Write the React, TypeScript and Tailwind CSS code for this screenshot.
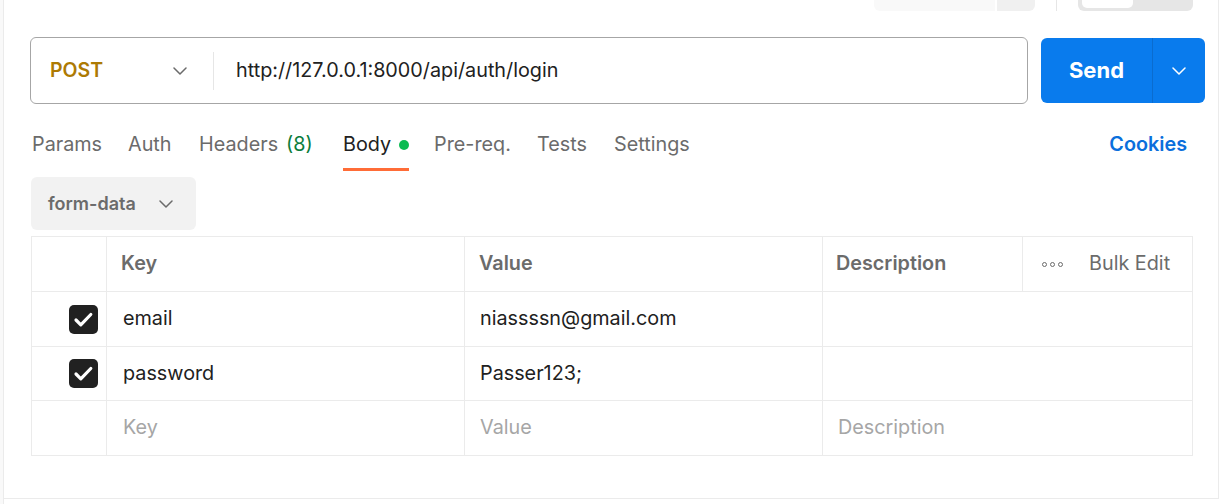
import React from "react";

const Chevron = ({ color = "#6b6b6b", className = "" }: { color?: string; className?: string }) => (
  <svg width="14" height="8" viewBox="0 0 14 8" className={className}>
    <path d="M1 1l6 6 6-6" fill="none" stroke={color} strokeWidth="1.5" strokeLinecap="round" strokeLinejoin="round" />
  </svg>
);

const Check = () => (
  <svg width="29" height="29" viewBox="0 0 29 29">
    <rect x="0" y="0" width="29" height="29" rx="5" fill="#212121" />
    <path d="M7 15l4.8 4.8 10-10.3" fill="none" stroke="#ffffff" strokeWidth="3.2" strokeLinecap="round" strokeLinejoin="round" />
  </svg>
);

export default function App() {
  const tabs = [
    { label: "Params", w: "w-[96px]" },
    { label: "Auth", w: "w-[71px]" },
    { label: "Headers", extra: "(8)", w: "w-[144px]" },
    { label: "Body", active: true, w: "w-[91px]" },
    { label: "Pre-req.", w: "w-[103px]" },
    { label: "Tests", w: "w-[77px]" },
    { label: "Settings", w: "w-[90px]" },
  ];
  const rows = [
    { k: "email", v: "niassssn@gmail.com", h: "h-[55px]" },
    { k: "password", v: "Passer123;", h: "h-[54px]" },
  ];
  return (
    <div className="w-[1221px] h-[504px] bg-white flex overflow-hidden font-['Inter',sans-serif]">
      <div className="w-[4px] h-full bg-[#f9f9f9] border-r border-[#ebebeb]" />
      <div className="w-[1215px] h-[499px] border-r border-b border-[#ebebeb] flex flex-col">
        {/* top strip */}
        <div className="h-[11px] flex items-start pl-[870px]">
          <div className="w-[121px] h-[11px] bg-[#f9f9f9] rounded-bl-[6px]" />
          <div className="ml-[2px] w-[38px] h-[11px] bg-[#f0f0f0] rounded-br-[6px]" />
          <div className="ml-[21px] w-px h-[11px] bg-[#e6e6e6]" />
          <div className="ml-[21px] w-[115px] h-[11px] bg-[#e6e6e6] rounded-b-[6px] pl-[4px]">
            <div className="w-[51px] h-[8px] bg-white rounded-b-[5px]" />
          </div>
        </div>
        {/* url row */}
        <div className="mt-[26px] pl-[26px] flex items-center">
          <div className="w-[998px] h-[67px] border border-[#a6a6a6] rounded-[6px] flex items-center">
            <div className="w-[182px] flex items-center pl-[19px] pr-[26px] justify-between">
              <span className="text-[19.5px] font-semibold text-[#ad7a03]">POST</span>
              <Chevron />
            </div>
            <div className="w-px h-[38px] bg-[#e6e6e6]" />
            <span className="ml-[22px] text-[19.8px] text-[#212121]">http://127.0.0.1:8000/api/auth/login</span>
          </div>
          <div className="ml-[13px] w-[164px] h-[65px] bg-[#097bed] rounded-[6px] flex">
            <div className="w-[111px] flex items-center justify-center">
              <span className="text-[22px] font-bold text-white">Send</span>
            </div>
            <div className="w-px h-full bg-[#0a6ccf]" />
            <div className="flex-1 flex items-center justify-center">
              <Chevron color="#ffffff" />
            </div>
          </div>
        </div>
        {/* tabs */}
        <div className="mt-[17px] pl-[28px] pr-[31px] flex items-start h-[50px]">
          {tabs.map((t) => (
            <div key={t.label} className={t.w + " h-[50px] flex"}>
              <div
                className={
                  "h-[50px] flex items-center border-b-[3px] " +
                  (t.active ? "border-[#ff6c37]" : "border-transparent")
                }
              >
                <span className={"text-[19.8px] " + (t.active ? "text-[#212121]" : "text-[#6b6b6b]")}>{t.label}</span>
                {t.extra && <span className="ml-[8px] text-[19.8px] text-[#0c7d3c]">{t.extra}</span>}
                {t.active && <span className="ml-[8px] w-[10px] h-[10px] rounded-full bg-[#0cbb52]" />}
              </div>
            </div>
          ))}
          <div className="flex-1" />
          <div className="h-[47px] flex items-center">
            <span className="text-[19.8px] font-semibold text-[#0b6fdc]">Cookies</span>
          </div>
        </div>
        {/* form-data */}
        <div className="mt-[6px] pl-[27px]">
          <div className="w-[165px] h-[53px] bg-[#f2f2f2] rounded-[6px] flex items-center pl-[17px] pr-[23px] justify-between">
            <span className="text-[18px] font-semibold text-[#6b6b6b]">form-data</span>
            <Chevron />
          </div>
        </div>
        {/* table */}
        <div className="mt-[6px] ml-[27px] w-[1162px] border border-[#ebebeb] text-[19.8px]">
          <div className="flex h-[55px] border-b border-[#ebebeb]">
            <div className="w-[75px] border-r border-[#ebebeb]" />
            <div className="w-[358px] border-r border-[#ebebeb] flex items-center pl-[14px] font-semibold text-[#6b6b6b]">Key</div>
            <div className="w-[358px] border-r border-[#ebebeb] flex items-center pl-[14px] font-semibold text-[#6b6b6b]">Value</div>
            <div className="w-[200px] border-r border-[#ebebeb] flex items-center pl-[13px] font-semibold text-[#6b6b6b]">Description</div>
            <div className="flex-1 flex items-center pl-[19px] text-[#6b6b6b]">
              <div className="flex gap-[3px]">
                <span className="w-[5px] h-[5px] rounded-full border-[1.5px] border-[#6b6b6b]" />
                <span className="w-[5px] h-[5px] rounded-full border-[1.5px] border-[#6b6b6b]" />
                <span className="w-[5px] h-[5px] rounded-full border-[1.5px] border-[#6b6b6b]" />
              </div>
              <span className="ml-[26px]">Bulk Edit</span>
            </div>
          </div>
          {rows.map((r) => (
            <div key={r.k} className={r.h + " flex border-b border-[#ebebeb]"}>
              <div className="w-[75px] border-r border-[#ebebeb] flex items-center justify-end pr-[8px]">
                <Check />
              </div>
              <div className="w-[358px] border-r border-[#ebebeb] flex items-center pl-[16px] text-[#212121]">{r.k}</div>
              <div className="w-[358px] border-r border-[#ebebeb] flex items-center pl-[15px] text-[#212121]">{r.v}</div>
              <div className="flex-1" />
            </div>
          ))}
          <div className="flex h-[54px]">
            <div className="w-[75px] border-r border-[#ebebeb]" />
            <div className="w-[358px] border-r border-[#ebebeb] flex items-center pl-[16px] text-[#a6a6a6]">Key</div>
            <div className="w-[358px] border-r border-[#ebebeb] flex items-center pl-[15px] text-[#a6a6a6]">Value</div>
            <div className="flex-1 flex items-center pl-[15px] text-[#a6a6a6]">Description</div>
          </div>
        </div>
      </div>
    </div>
  );
}
